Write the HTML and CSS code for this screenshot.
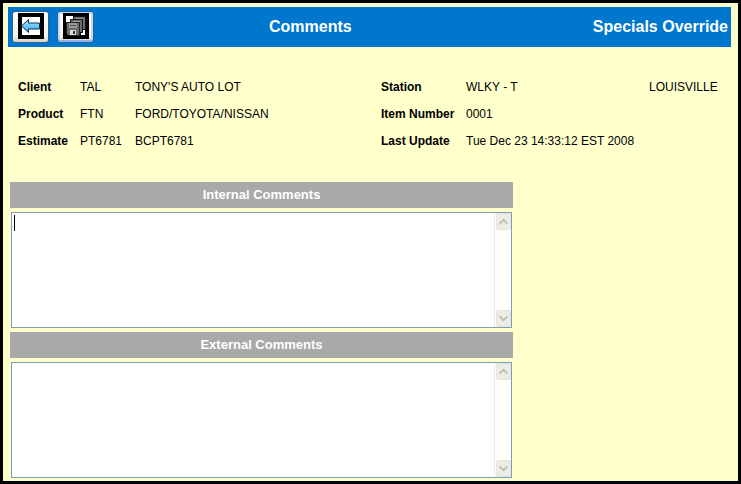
FILE: index.html
```
<!DOCTYPE html>
<html lang="en">
<head>
    <meta charset="UTF-8">
    <meta name="viewport" content="width=device-width, initial-scale=1.0">
    <title>Comments - Specials Override</title>
    <link rel="stylesheet" href="styles.css">
</head>
<body>
    <!-- Toolbar -->
    <header class="toolbar">
        <div class="toolbar-buttons">
            <button type="button" class="tool-btn" aria-label="Back">
                <svg width="26" height="26" viewBox="0 0 26 26">
                    <defs>
                        <linearGradient id="arrowFill" x1="0" y1="0" x2="0" y2="1">
                            <stop offset="0" stop-color="#a8ecff"/>
                            <stop offset="1" stop-color="#2fa4f2"/>
                        </linearGradient>
                    </defs>
                    <rect width="26" height="26" fill="#000"/>
                    <rect x="4" y="4" width="18" height="18" fill="#fff"/>
                    <path d="M3.500 13 L10.500 6.500 V10 H21.500 V16 H10.500 V19.500 Z" fill="url(#arrowFill)" stroke="#12304a" stroke-width="1"/>
                </svg>
            </button>
            <button type="button" class="tool-btn tool-btn-default" aria-label="Save all">
                <svg width="26" height="26" viewBox="0 0 26 26">
                    <rect width="26" height="26" fill="#000"/>
                    <path d="M3 3 H10 V9 H3 Z M18 17 H22 V22 H18 Z" fill="#fff"/>
                    <path d="M10.500 3.500 H22.500 V16.500 H10.500 Z" fill="#6c6c6c" stroke="#111"/>
                    <path d="M13 5 H20 V7 H13 Z" fill="#999"/>
                    <path d="M7.500 6.500 H19.500 V19.500 H7.500 Z" fill="#6c6c6c" stroke="#111"/>
                    <path d="M10 8 H17 V9 H10 Z" fill="#999"/>
                    <path d="M3.500 9.500 H16.500 V22.500 H5.500 L3.500 20.500 Z" fill="#6c6c6c" stroke="#222"/>
                    <path d="M6 10 H14 V15 H6 Z" fill="#999"/>
                    <path d="M7 12.500 H13" stroke="#555"/>
                    <path d="M7 17 H13 V22 H7 Z" fill="#ddd"/>
                    <path d="M10 18 H12 V21 H10 Z" fill="#333"/>
                </svg>
            </button>
        </div>
        <h1 class="toolbar-title">Comments</h1>
        <div class="toolbar-section">Specials Override</div>
    </header>

    <!-- Order details -->
    <table class="details">
        <colgroup>
            <col class="col-label">
            <col class="col-code">
            <col class="col-name">
            <col class="col-label-wide">
            <col class="col-value">
            <col>
        </colgroup>
        <tr>
            <th scope="row">Client</th>
            <td>TAL</td>
            <td>TONY'S AUTO LOT</td>
            <th scope="row">Station</th>
            <td>WLKY - T</td>
            <td>LOUISVILLE</td>
        </tr>
        <tr>
            <th scope="row">Product</th>
            <td>FTN</td>
            <td>FORD/TOYOTA/NISSAN</td>
            <th scope="row">Item Number</th>
            <td>0001</td>
            <td></td>
        </tr>
        <tr>
            <th scope="row">Estimate</th>
            <td>PT6781</td>
            <td>BCPT6781</td>
            <th scope="row">Last Update</th>
            <td>Tue Dec 23 14:33:12 EST 2008</td>
            <td></td>
        </tr>
    </table>

    <!-- Comment boxes -->
    <form class="comments">
        <label class="comment-label" for="internal">Internal Comments</label>
        <div class="comment-box">
            <textarea id="internal" name="internal"></textarea>
            <span class="caret"></span>
            <div class="scrollbar" aria-hidden="true">
                <svg class="scroll-arrow" viewBox="0 0 15 17"><path d="M3 11 L7.500 6.500 L12 11"/></svg>
                <svg class="scroll-arrow" viewBox="0 0 15 17"><path d="M3 6 L7.500 10.500 L12 6"/></svg>
            </div>
        </div>

        <label class="comment-label" for="external">External Comments</label>
        <div class="comment-box">
            <textarea id="external" name="external"></textarea>
            <div class="scrollbar" aria-hidden="true">
                <svg class="scroll-arrow" viewBox="0 0 15 17"><path d="M3 11 L7.500 6.500 L12 11"/></svg>
                <svg class="scroll-arrow" viewBox="0 0 15 17"><path d="M3 6 L7.500 10.500 L12 6"/></svg>
            </div>
        </div>
    </form>
</body>
</html>
```
FILE: styles.css
```
* {
    margin: 0;
    padding: 0;
    box-sizing: border-box;
}

body {
    min-height: 100vh;
    padding: 4px 7px 3px 5px;
    border: 3px solid #000;
    background: #ffffcc;
    color: #000;
    font-family: "Liberation Sans", Arial, sans-serif;
    font-size: 12px;
}

/* Toolbar */
.toolbar {
    display: grid;
    grid-template-columns: 3fr 4fr 5fr;
    align-items: center;
    height: 40px;
    padding: 0 3px 0 4px;
    background: #0077cf;
    color: #fff;
    font-size: 16px;
    font-weight: bold;
}

.toolbar-buttons {
    display: flex;
    gap: 8px;
}

.tool-btn {
    display: flex;
    justify-content: center;
    width: 37px;
    height: 32px;
    padding: 1px;
    border: 1px solid #2c5f92;
    border-radius: 3px;
    background: linear-gradient(#fff, #f2f0ea 80%, #d8d2c6);
}

.tool-btn-default {
    box-shadow: inset 0 -2px 0 #8fb0ea, inset 0 0 0 2px #c6d8f6;
}

.toolbar-title {
    font-size: 16px;
    text-align: center;
}

.toolbar-section {
    text-align: right;
}

/* Order details */
.details {
    width: 100%;
    margin: 26px 0 28px;
    padding-left: 10px;
    border-spacing: 0;
    table-layout: fixed;
}

.details th,
.details td {
    height: 27px;
    text-align: left;
    white-space: nowrap;
}

.col-label {
    width: 62px;
}

.col-code {
    width: 55px;
}

.col-name {
    width: 246px;
}

.col-label-wide {
    width: 85px;
}

.col-value {
    width: 183px;
}

/* Comment boxes */
.comments {
    max-width: 505px;
    padding-left: 2px;
}

.comment-label {
    display: block;
    height: 26px;
    background: #a9a9a9;
    color: #fff;
    font-size: 13px;
    font-weight: bold;
    line-height: 26px;
    text-align: center;
}

.comment-box {
    position: relative;
    display: flex;
    height: 116px;
    margin: 4px 1px;
    border: 1px solid #7f9db9;
    background: #fff;
}

.comment-box:last-child {
    margin-bottom: 0;
}

.comment-box textarea {
    flex: 1;
    min-width: 0;
    padding: 2px;
    border: none;
    outline: none;
    background: transparent;
    font: inherit;
    resize: none;
}

.caret {
    position: absolute;
    top: 2px;
    left: 2px;
    width: 1px;
    height: 16px;
    background: #000;
}

.scrollbar {
    display: flex;
    flex-direction: column;
    justify-content: space-between;
    width: 17px;
    padding: 0 1px;
    border-left: 1px solid #eeede5;
    background: #fefefb;
}

.scroll-arrow {
    width: 15px;
    height: 17px;
    border: 1px solid #e5e4dc;
    border-radius: 2px;
    background: #edece6;
}

.scroll-arrow path {
    fill: none;
    stroke: #bdbcb4;
    stroke-width: 2;
}
```
